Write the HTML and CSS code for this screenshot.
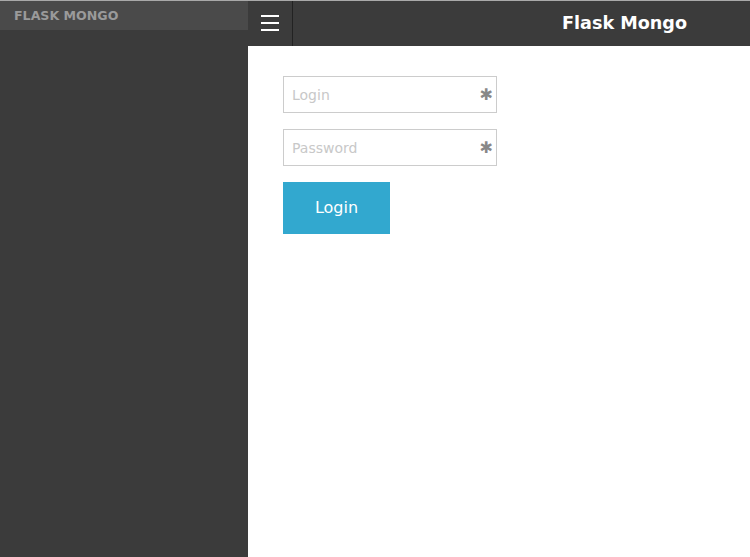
FILE: index.html
```html
<!DOCTYPE html>
<html>
<head>
<meta charset="utf-8">
<link rel="stylesheet" href="styles.css">
</head>
<body>
<div class="app">
  <aside class="sidebar">
    <div class="brand">FLASK MONGO</div>
  </aside>
  <div class="main">
    <header class="topbar">
      <button class="menu" aria-label="menu">
        <svg width="18" height="16" viewBox="0 0 18 16"><rect x="0" y="0" width="18" height="2" fill="#fff"/><rect x="0" y="7" width="18" height="2" fill="#fff"/><rect x="0" y="14" width="18" height="2" fill="#fff"/></svg>
      </button>
      <div class="title">Flask Mongo</div>
    </header>
    <form class="form">
      <div class="field"><input type="text" placeholder="Login"><span class="req">✱</span></div>
      <div class="field"><input type="password" placeholder="Password"><span class="req">✱</span></div>
      <button type="button" class="btn">Login</button>
    </form>
  </div>
</div>
</body>
</html>
```
FILE: styles.css
```css
html, body { margin: 0; padding: 0; }
body { font-family: "DejaVu Sans", sans-serif; background: #fff; }
.app { display: flex; height: 557px; border-top: 1px solid #a9a9a9; box-sizing: border-box; }
.sidebar { width: 248px; background: #3b3b3b; flex-shrink: 0; }
.brand { height: 29px; background: #4a4a4a; color: #9a9a9a; font-weight: bold; font-size: 12.6px; padding: 1px 0 0 14px; line-height: 28px; box-sizing: border-box; }
.main { flex: 1; display: flex; flex-direction: column; }
.topbar { height: 45px; background: #3b3b3b; display: flex; align-items: center; }
.menu { width: 45px; height: 45px; border: 0; border-right: 1px solid #222; background: transparent; padding: 0; display: flex; align-items: center; justify-content: center; box-sizing: border-box; }
.menu svg { display: block; margin-top: -1px; }
.title { color: #fff; font-weight: bold; font-size: 17.6px; margin-left: 269px; margin-top: -2px; }
.form { padding: 30px 0 0 35px; display: flex; flex-direction: column; align-items: flex-start; }
.field { position: relative; width: 214px; height: 37px; margin-bottom: 16px; }
.field input { width: 100%; height: 100%; box-sizing: border-box; border: 1px solid #ccc; padding: 0 8px; font-family: "DejaVu Sans", sans-serif; font-size: 14px; color: #555; outline: none; }
.field input::placeholder { color: #c8c8c8; }
.req { position: absolute; right: 4px; top: 11px; color: #888; font-size: 16px; font-weight: bold; line-height: 16px; }
.btn { width: 107px; height: 52px; background: #32a8cf; border: 0; color: #fff; font-family: "DejaVu Sans", sans-serif; font-size: 16px; padding: 0 0 2px; }
```
